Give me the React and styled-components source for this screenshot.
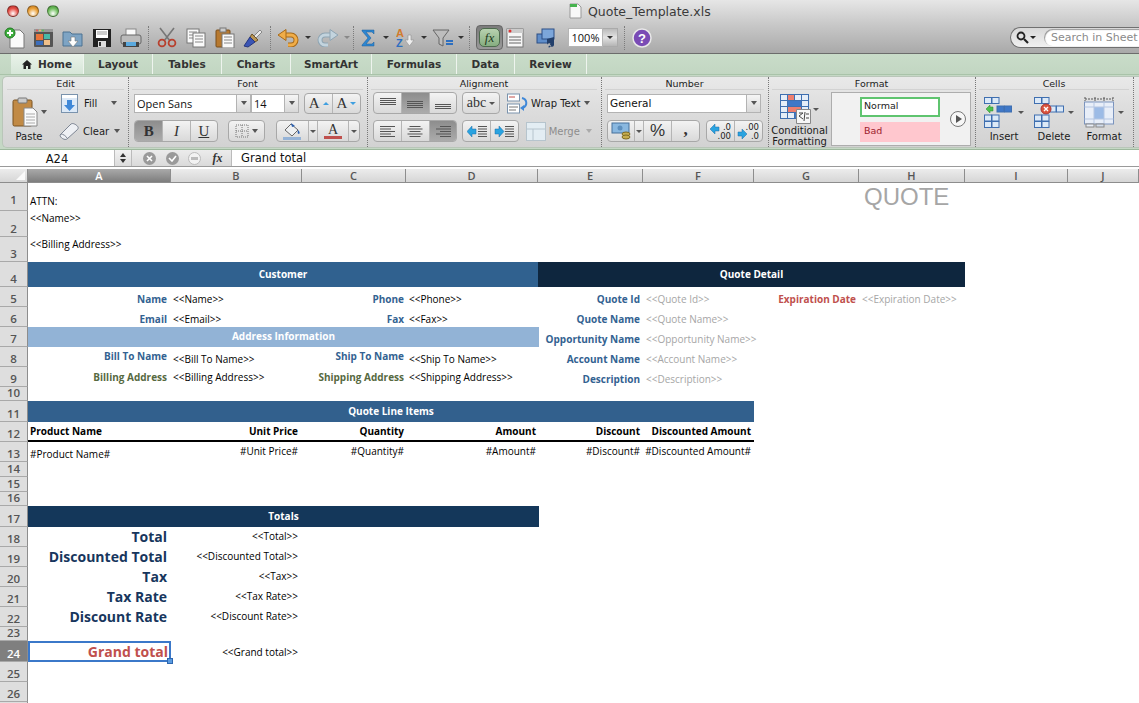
import React from 'react'
import styled, { createGlobalStyle } from 'styled-components'

const uiFont = '"DejaVu Sans", "Liberation Sans", sans-serif'
const sheetFont = '"Open Sans", "Liberation Sans", sans-serif'

const GlobalStyle = createGlobalStyle`
  html, body { margin: 0; padding: 0; background: #fff; overflow: hidden; }
  #root { width: 1139px; height: 703px; overflow: hidden; }
  * { box-sizing: border-box; }
`

const Chrome = styled.div`
  height: 54px;
  background: linear-gradient(#e6e6e6, #c9c9c9 45%, #a9a9a9);
  border-bottom: 1px solid #6c6c6c;
`
const TitleBar = styled.div`
  height: 22px;
  display: flex;
  align-items: center;
  padding-left: 7px;
`
const Light = styled.span`
  width: 12px;
  height: 12px;
  margin-right: 8px;
  border-radius: 50%;
  border: 1px solid rgba(0, 0, 0, 0.35);
  background: radial-gradient(circle at 50% 75%, #fff 0, ${p => p.$c} 55%, ${p => p.$d});
`
const Title = styled.div`
  margin-left: 502px;
  display: flex;
  align-items: center;
  gap: 6px;
  font: 12.5px ${uiFont};
  color: #3a3a3a;
`
const ToolRow = styled.div`
  height: 31px;
  display: flex;
  align-items: center;
`
const Slot = styled.div`
  width: ${p => p.$w}px;
  flex: none;
  display: flex;
  align-items: center;
  justify-content: center;
  gap: 2px;
`
const Sep = styled.div`
  width: 1px;
  height: 24px;
  flex: none;
  margin: 0 ${p => p.$m || 8}px;
  border-left: 1px dotted #7c7c7c;
`
const FxToggle = styled.div`
  width: 27px;
  height: 25px;
  flex: none;
  margin: 0 2px 0 4px;
  display: flex;
  align-items: center;
  justify-content: center;
  background: linear-gradient(#7b7b7b, #999);
  border: 1px solid #666;
  border-radius: 4px;
`
const FxFace = styled.div`
  width: 21px;
  height: 19px;
  display: flex;
  align-items: center;
  justify-content: center;
  border-radius: 5px;
  border: 1px solid #4d6b4d;
  background: linear-gradient(#b8d2b0, #86ad80);
  font: italic 13px "Liberation Serif", serif;
  color: #1e3a1e;
`
const ZoomBox = styled.div`
  width: 50px;
  height: 19px;
  flex: none;
  display: flex;
  font: 11px ${sheetFont};
  color: #111;
`
const ZoomValue = styled.div`
  width: 35px;
  background: #fff;
  border: 1px solid #b5b5b5;
  display: flex;
  align-items: center;
  justify-content: center;
`
const ZoomArrow = styled.div`
  width: 15px;
  background: linear-gradient(#bbb, #e3e3e3 50%, #b5b5b5);
  border: 1px solid #aaa;
  border-left: 0;
  display: flex;
  align-items: center;
  justify-content: center;
`
const Search = styled.div`
  margin-left: auto;
  width: 129px;
  height: 21px;
  flex: none;
  display: flex;
  align-items: center;
  padding-left: 5px;
  gap: 1px;
  border: 1px solid #707070;
  border-right: 0;
  border-radius: 11px 0 0 11px;
  background: linear-gradient(#d8d8d8, #f0f0f0);
`
const SearchInput = styled.div`
  flex: 1;
  height: 17px;
  margin-left: 7px;
  padding-left: 7px;
  background: #fff;
  border-radius: 9px 0 0 9px;
  box-shadow: inset 1px 1px 1px #999;
  font: 11px/18px ${uiFont};
  color: #8a8a8a;
  white-space: nowrap;
`

const TabStrip = styled.div`
  height: 21px;
  display: flex;
  padding-left: 11px;
  background: linear-gradient(#c9dcc9, #c2d6c2);
  border-bottom: 1px solid #a9c3a9;
`
const Tab = styled.div`
  width: ${p => p.$w}px;
  display: flex;
  align-items: center;
  justify-content: center;
  gap: 6px;
  font: bold 10.5px ${uiFont};
  color: #333;
  border-right: 1px solid #eef4ee;
  background: ${p => (p.$active ? 'linear-gradient(#eaf3ea, #d6e6d8)' : 'transparent')};
`

const RibbonWrap = styled.div`
  height: 75px;
  background: #c5d8c5;
  padding: 1px 0 1px 2px;
  border-bottom: 1px solid #9db89d;
`
const Ribbon = styled.div`
  height: 72px;
  display: flex;
  border-radius: 5px 0 0 5px;
  border: 1px solid #b9c6b9;
  border-right: 0;
  background: linear-gradient(#e9e9e9, #dcdcdc 50%, #d2d2d2);
`
const Group = styled.section`
  width: ${p => p.$w}px;
  flex: none;
  display: flex;
  flex-direction: column;
  padding: 0 4px 0 ${p => (p.$first ? 4 : 3)}px;
  border-left: ${p => (p.$first ? '0' : '1px dotted #777')};
  border-right: ${p => (p.$last ? '1px dotted #777' : '0')};
`
const GroupName = styled.div`
  height: 13px;
  flex: none;
  text-align: center;
  font: 9.5px/13px ${uiFont};
  color: #222;
  border-bottom: 1px solid #d2d2d2;
`
const GroupBody = styled.div`
  flex: 1;
  display: flex;
  gap: ${p => p.$gap || 0}px;
  padding-top: ${p => p.$top ?? 3}px;
  padding-left: ${p => p.$left || 0}px;
`
const Stack = styled.div`
  display: flex;
  flex-direction: column;
  gap: ${p => p.$gap ?? 7}px;
`
const Line = styled.div`
  display: flex;
  align-items: center;
  height: ${p => p.$h || 20}px;
  margin-left: ${p => p.$ml || 0}px;
`
const Label = styled.span`
  font: 10px ${uiFont};
  color: ${p => (p.$off ? '#8d8d8d' : '#1b1b1b')};
  white-space: nowrap;
  margin-left: ${p => p.$ml || 0}px;
`
const IconBox = styled.div`
  display: flex;
  align-items: center;
  flex: none;
  margin-left: ${p => p.$ml || 0}px;
`
const Seg = styled.div`
  display: flex;
  height: ${p => p.$h || 22}px;
  margin-left: ${p => p.$ml || 0}px;
  border: 1px solid #a8a8a8;
  border-radius: 4px;
  overflow: hidden;
  background: linear-gradient(#f3f3f3, #d9d9d9);
`
const SegBtn = styled.div`
  width: ${p => p.$w || 27.33}px;
  display: flex;
  align-items: center;
  justify-content: center;
  gap: 3px;
  padding-bottom: ${p => p.$pb || 0}px;
  border-left: ${p => (p.$first ? '0' : '1px solid #b5b5b5')};
  background: ${p => (p.$on ? 'linear-gradient(#8d8d8d, #ababab)' : 'transparent')};
  font: ${p => p.$font || `13px ${uiFont}`};
  color: #333;
`
const Combo = styled.div`
  width: ${p => p.$w}px;
  height: 19px;
  flex: none;
  display: flex;
  align-items: center;
  padding-left: 2px;
  background: #fff;
  border: 1px solid #b3b3b3;
  font: ${p => p.$font || `11px ${sheetFont}`};
  color: #111;
`
const ComboText = styled.span`
  flex: 1;
`
const ComboArrow = styled.span`
  width: 14px;
  height: 100%;
  display: flex;
  align-items: center;
  justify-content: center;
  background: linear-gradient(#f5f5f5, #d8d8d8);
  border-left: 1px solid #b3b3b3;
`
const Caret = styled.i`
  display: inline-block;
  flex: none;
  margin-left: ${p => p.$ml || 0}px;
  width: 0;
  height: 0;
  border-left: ${p => p.$s || 3.5}px solid transparent;
  border-right: ${p => p.$s || 3.5}px solid transparent;
  ${p => (p.$up ? 'border-bottom' : 'border-top')}: ${p => (p.$s || 3.5) + 0.5}px solid ${p => p.$c || '#555'};
`
const ToolCol = styled.div`
  width: ${p => p.$w}px;
  flex: none;
  display: flex;
  flex-direction: column;
  align-items: center;
`
const ToolIcon = styled.div`
  height: ${p => p.$h || 36}px;
  display: flex;
  align-items: center;
  gap: ${p => p.$gap ?? 4}px;
`
const ToolText = styled.div`
  font: 10px/11px ${uiFont};
  color: #1b1b1b;
  text-align: center;
  white-space: nowrap;
`
const StyleGallery = styled.div`
  width: 140px;
  height: 54px;
  flex: none;
  margin: -1px 0 0 4px;
  display: flex;
  align-items: center;
  padding-left: 28px;
  background: #f1f1f1;
  border: 1px solid #adadad;
`
const StyleList = styled.div`
  display: flex;
  flex-direction: column;
  gap: 5px;
  width: 80px;
`
const StyleChip = styled.div`
  height: 20px;
  padding-left: 2px;
  font: 9.5px/14px ${uiFont};
  color: ${p => (p.$bad ? '#9c1c2c' : '#222')};
  background: ${p => (p.$bad ? '#ffc7ce' : '#fff')};
  border: 2px solid ${p => (p.$bad ? '#ffc7ce' : '#5fc46f')};
`
const PlayCircle = styled.div`
  width: 16px;
  height: 16px;
  margin-left: 10px;
  display: flex;
  align-items: center;
  justify-content: center;
  border: 1px solid #777;
  border-radius: 50%;
  background: #f7f7f7;
  padding-left: 2px;
`
const PlayArrow = styled.i`
  border-left: 6px solid #555;
  border-top: 4px solid transparent;
  border-bottom: 4px solid transparent;
`

const FormulaBar = styled.div`
  height: 17px;
  display: flex;
  background: #fff;
  border-bottom: 1px solid #9a9a9a;
  font: 11.5px ${uiFont};
  color: #111;
`
const NameBox = styled.div`
  width: 114px;
  padding-top: 1px;
  display: flex;
  align-items: center;
  justify-content: center;
`
const Stepper = styled.div`
  width: 18px;
  display: flex;
  flex-direction: column;
  align-items: center;
  justify-content: center;
  gap: 2px;
  border-left: 1px solid #bbb;
  border-right: 1px solid #bbb;
  background: linear-gradient(#f2f2f2, #dcdcdc);
`
const StepArrow = styled.i`
  border-left: 3px solid transparent;
  border-right: 3px solid transparent;
  ${p => (p.$up ? 'border-bottom: 4px solid #333;' : 'border-top: 4px solid #333;')}
`
const FormulaBtns = styled.div`
  width: 99px;
  display: flex;
  align-items: center;
  padding-left: 11px;
  gap: 9.5px;
  background: linear-gradient(#ececec, #dadada);
`
const RoundBtn = styled.div`
  width: 13px;
  height: 13px;
  display: flex;
  align-items: center;
  justify-content: center;
  border-radius: 50%;
  background: ${p => p.$c || '#9a9a9a'};
  border: ${p => (p.$c ? '1px solid #bbb' : '0')};
`
const FnLabel = styled.span`
  margin-left: 2px;
  font: italic bold 12px "Liberation Serif", serif;
  color: #333;
`
const FormulaText = styled.div`
  flex: 1;
  padding-left: 9px;
  font: 11.5px/17px ${uiFont};
  border-left: 1px solid #bbb;
`
const Gap = styled.div`
  height: 2px;
  background: #fff;
`

const columns = [143, 131, 104, 132, 105, 111, 105, 106, 103, 71]
const rows = [28, 26, 25, 25, 20, 20, 20, 20, 20, 14, 21, 20, 20, 15, 15, 14, 21, 20, 20, 20, 20, 20, 14, 21, 20, 20, 20]
const rightPad = { 2: 4, 3: 4, 4: 2, 5: 2, 6: 3, 7: 3, 8: 3 }

const Sheet = styled.div`
  display: grid;
  grid-template-columns: 28px ${columns.map(c => `${c}px`).join(' ')};
  grid-template-rows: 14px ${rows.map(r => `${r}px`).join(' ')};
`
const Corner = styled.div`
  grid-area: 1 / 1;
  display: flex;
  align-items: flex-end;
  justify-content: flex-end;
  padding: 0 2px 2px 0;
  background: linear-gradient(#ececec, #d6d6d6);
  border-right: 1px solid #8d8d8d;
  border-bottom: 1px solid #8d8d8d;
`
const CornerMark = styled.i`
  border-left: 9px solid transparent;
  border-bottom: 9px solid #fbfbfb;
`
const ColHead = styled.div`
  grid-area: 1 / ${p => p.$c};
  display: flex;
  align-items: center;
  justify-content: center;
  font: 600 11px ${sheetFont};
  color: ${p => (p.$on ? '#fff' : '#555')};
  background: ${p => (p.$on ? 'linear-gradient(#aaa, #7d7d7d)' : 'linear-gradient(#ececec, #d6d6d6)')};
  border-right: 1px solid #8d8d8d;
  border-bottom: 1px solid #8d8d8d;
`
const RowHead = styled.div`
  grid-area: ${p => p.$r} / 1;
  display: flex;
  align-items: flex-end;
  justify-content: center;
  padding-bottom: ${p => p.$pb || 0}px;
  font: 600 11.5px/15px ${sheetFont};
  color: ${p => (p.$on ? '#fff' : '#555')};
  background: ${p => (p.$on ? '#7f7f7f' : '#dedede')};
  border-right: 1px solid #8d8d8d;
  border-bottom: 1px solid #a9a9a9;
`
const Cell = styled.div`
  grid-area: ${p => p.$r} / ${p => p.$c} / span 1 / span ${p => p.$span || 1};
  min-width: 0;
  display: flex;
  white-space: nowrap;
  align-items: ${p => p.$v || 'center'};
  justify-content: ${p => (p.$right ? 'flex-end' : 'flex-start')};
  padding-top: ${p => p.$pt || 0}px;
  padding-bottom: ${p => p.$pb || 0}px;
  padding-right: ${p => (p.$right ? rightPad[p.$c] : 0)}px;
  padding-left: ${p => (p.$right ? 0 : p.$c <= 3 ? 2 : 3)}px;
  font: ${p => p.$weight || 400} ${p => p.$size || 10}px ${sheetFont};
  color: ${p => p.$color || '#000'};
`
const Band = styled.div`
  grid-area: ${p => p.$r} / ${p => p.$c} / span 1 / span ${p => p.$span};
  display: flex;
  align-items: center;
  justify-content: center;
  padding-bottom: 2px;
  margin-right: ${p => (p.$over ? -1 : 0)}px;
  background: ${p => p.$bg};
  color: #fff;
  font: 700 10px ${sheetFont};
`
const HeaderCell = styled(Cell)`
  border-bottom: 2px solid #000;
  font-weight: 700;
`
const QuoteTitle = styled(Cell)`
  font: 24px/28px "Liberation Sans", sans-serif;
  color: #a6a6a6;
  padding-left: 5px;
  align-items: flex-start;
`
const Selection = styled.div`
  grid-area: 25 / 2;
  position: relative;
  display: flex;
  align-items: center;
  justify-content: flex-end;
  padding-right: 1px;
  border: 2px solid #3b78c9;
  font: 700 14px ${sheetFont};
  color: #c0504d;
  white-space: nowrap;
`
const Handle = styled.i`
  position: absolute;
  right: -4px;
  bottom: -4px;
  width: 6px;
  height: 6px;
  background: #5b9be0;
  border: 1px solid #2e67b0;
`

/* toolbar icons */
const Icon = ({ w = 20, h = 20, children }) => (
  <svg width={w} height={h} viewBox={`0 0 ${w} ${h}`} style={{ display: 'block', flex: 'none' }}>{children}</svg>
)

const NewDoc = () => (
  <Icon w={22} h={22}>
    <path d="M6 3h10l4 4v14H6z" fill="#fafafa" stroke="#777" />
    <circle cx="6" cy="6" r="5" fill="#3fae3f" stroke="#1f7a1f" />
    <path d="M6 3v6M3 6h6" stroke="#fff" strokeWidth="2" />
  </Icon>
)
const GalleryIcon = () => (
  <Icon w={21} h={20}>
    <rect x="1" y="1" width="19" height="18" rx="1" fill="#555" />
    <rect x="1" y="1" width="19" height="3" fill="#999" />
    <circle cx="4" cy="2.5" r="1" fill="#e55" /><circle cx="7" cy="2.5" r="1" fill="#ec5" /><circle cx="10" cy="2.5" r="1" fill="#5c5" />
    <rect x="3" y="6" width="7" height="6" fill="#e8743b" /><rect x="11" y="6" width="6" height="5" fill="#49b9a8" />
    <rect x="3" y="13" width="7" height="4" fill="#3c6ebc" /><rect x="11" y="12" width="6" height="5" fill="#f0c08a" />
  </Icon>
)
const OpenIcon = () => (
  <Icon w={22} h={20}>
    <path d="M1 4h7l2 2h10v12H1z" fill="#7ea4c4" stroke="#4d7392" />
    <path d="M9 9h4v4h3l-5 6-5-6h3z" fill="#fff" stroke="#777" strokeWidth=".6" />
  </Icon>
)
const SaveIcon = () => (
  <Icon w={20} h={20}>
    <path d="M1 1h18v18H1z" fill="#222" />
    <rect x="4" y="2" width="12" height="8" fill="#fff" />
    <path d="M5 4h10M5 6h10" stroke="#999" />
    <rect x="6" y="13" width="8" height="6" fill="#ddd" /><rect x="7" y="14" width="2" height="4" fill="#333" />
  </Icon>
)
const PrintIcon = () => (
  <Icon w={22} h={20}>
    <rect x="6" y="1" width="10" height="7" fill="#fafafa" stroke="#888" />
    <rect x="1" y="7" width="20" height="9" rx="2" fill="#bbb" stroke="#666" />
    <rect x="3" y="14" width="16" height="5" fill="#444" />
    <rect x="6" y="14" width="10" height="4" fill="#5aa9df" />
  </Icon>
)
const CutIcon = () => (
  <Icon w={20} h={21}>
    <path d="M3 1l10 13M17 1L7 14" stroke="#777" strokeWidth="1.6" />
    <circle cx="5" cy="16" r="3.4" fill="none" stroke="#b8402e" strokeWidth="1.8" />
    <circle cx="15" cy="16" r="3.4" fill="none" stroke="#b8402e" strokeWidth="1.8" />
  </Icon>
)
const DocLines = ({ x, y, w = 12, h = 14 }) => (
  <g>
    <rect x={x} y={y} width={w} height={h} fill="#fafafa" stroke="#777" />
    <path d={`M${x + 2} ${y + 3}h${w - 4}M${x + 2} ${y + 6}h${w - 4}M${x + 2} ${y + 9}h${w - 4}`} stroke="#888" />
  </g>
)
const CopyIcon = () => (
  <Icon w={20} h={20}>
    <DocLines x={1} y={1} />
    <DocLines x={7} y={5} />
  </Icon>
)
const PasteSmall = () => (
  <Icon w={20} h={21}>
    <rect x="1" y="3" width="14" height="17" rx="1" fill="#b7792f" stroke="#7a4f1c" />
    <rect x="5" y="1" width="6" height="4" fill="#ccc" stroke="#777" />
    <DocLines x={7} y={7} />
  </Icon>
)
const BrushIcon = () => (
  <Icon w={21} h={20}>
    <path d="M11 8l6-6 2 2-6 6z" fill="#e9e9e9" stroke="#888" />
    <path d="M9 6l6 6-3 2-5-5z" fill="#b99555" stroke="#6d5326" />
    <path d="M7 9l5 5-7 5-4-1z" fill="#3b55b5" stroke="#26367c" />
  </Icon>
)
const UndoIcon = ({ redo }) => {
  const edge = redo ? '#8fa5b3' : '#a76a1a'
  const fill = redo ? '#c3d4de' : '#f0ad48'
  return (
    <Icon w={23} h={18}>
      <g transform={redo ? 'translate(23 0) scale(-1 1)' : undefined}>
        <path d="M8 6h6a5 5 0 0 1 0 10h-3" fill="none" stroke={edge} strokeWidth="5" />
        <path d="M8 6h6a5 5 0 0 1 0 10h-3" fill="none" stroke={fill} strokeWidth="3" />
        <path d="M9 .5L1 6l8 5.500z" fill={fill} stroke={edge} />
      </g>
    </Icon>
  )
}
const SigmaIcon = () => (
  <Icon w={14} h={18}>
    <path d="M1 1h12v4l-2-2H5l5 6-5 6h6l2-2v4H1v-1l6-7-6-7z" fill="#2d86d1" stroke="#1c5c99" strokeWidth=".5" />
  </Icon>
)
const SortIcon = () => (
  <Icon w={20} h={20}>
    <text x="0" y="9" fontFamily="Liberation Sans, sans-serif" fontSize="11" fontWeight="700" fill="#d27a2c">A</text>
    <text x="0" y="19" fontFamily="Liberation Sans, sans-serif" fontSize="11" fontWeight="700" fill="#2d6fc0">Z</text>
    <path d="M12 7h3v5h3l-4.500 6L9 12h3z" fill="#eee" stroke="#999" strokeWidth=".7" />
  </Icon>
)
const FilterIcon = () => (
  <Icon w={22} h={20}>
    <path d="M1 2h16l-6 8v8l-4-2v-6z" fill="#bdbdbd" stroke="#666" />
    <path d="M14 13h7M14 16h7" stroke="#2d6fc0" strokeWidth="1.8" />
  </Icon>
)
const FormIcon = () => (
  <Icon w={18} h={20}>
    <rect x="1" y="1" width="16" height="18" fill="#f6f6f6" stroke="#777" />
    <rect x="1" y="1" width="16" height="4" fill="#ccc" />
    <circle cx="4" cy="3" r="1.500" fill="#d33" />
    <path d="M3 9h12M3 12h12M3 15h12" stroke="#666" />
  </Icon>
)
const MediaIcon = () => (
  <Icon w={21} h={20}>
    <rect x="1" y="6" width="11" height="9" fill="#5f8dc9" stroke="#2d4f85" />
    <rect x="6" y="1" width="12" height="10" fill="#7ca6da" stroke="#2d4f85" />
    <path d="M12 19a2 2 0 1 0-1-2V11l7-2v8a2 2 0 1 1-1-2" fill="#223f6b" />
  </Icon>
)
const HelpIcon = () => (
  <Icon w={20} h={20}>
    <circle cx="10" cy="10" r="9" fill="#7a4bb5" stroke="#e8e8e8" strokeWidth="1.500" />
    <text x="10" y="14.500" textAnchor="middle" fontFamily="Liberation Sans, sans-serif" fontSize="13" fontWeight="700" fill="#fff">?</text>
  </Icon>
)
const DocTab = () => (
  <Icon w={13} h={16}>
    <path d="M1 1h8l3 3v11H1z" fill="#f8f8f8" stroke="#999" />
    <rect x="1" y="1" width="7" height="3" fill="#47b34f" />
  </Icon>
)
const Magnifier = () => (
  <Icon w={13} h={13}>
    <circle cx="5" cy="5" r="3.500" fill="none" stroke="#222" strokeWidth="1.800" />
    <path d="M8 8l4 4" stroke="#222" strokeWidth="2.200" />
  </Icon>
)
const HomeGlyph = () => (
  <Icon w={10} h={9}>
    <path d="M5 0l5 4.500H8.500V9H6V6H4v3H1.500V4.500H0z" fill="#222" />
  </Icon>
)

/* ribbon icons */
const PasteBig = () => (
  <Icon w={26} h={30}>
    <rect x="1" y="3" width="19" height="26" rx="1.500" fill="#c18a45" stroke="#7a5220" />
    <rect x="6" y="1" width="9" height="5" rx="1" fill="#ccc" stroke="#777" />
    <path d="M12 11h9l4 4v14H12z" fill="#fafafa" stroke="#888" />
    <path d="M14 17h9M14 20h9M14 23h9M14 26h9" stroke="#aaa" />
  </Icon>
)
const FillDown = () => (
  <Icon w={17} h={19}>
    <rect x=".5" y=".5" width="16" height="18" fill="#dce9f7" stroke="#7a93ad" />
    <rect x="1" y="1" width="15" height="3" fill="#fff" />
    <path d="M6 6h5v5h3l-5.500 6L3 11h3z" fill="#3f88d8" />
  </Icon>
)
const Eraser = () => (
  <Icon w={20} h={19}>
    <path d="M1 13L12 2c2-1.500 6 1 7 3 .5 1 0 2-1 3L8 17c-2 1.500-7-1-7-4z" fill="#eef0f4" stroke="#7d8593" />
    <path d="M2 12c2 0 5 2 6 4" stroke="#7d8593" fill="none" />
  </Icon>
)
const BorderIcon = () => (
  <Icon w={14} h={14}>
    <path d="M1 1h12v12H1zM7 1v12M1 7h12" fill="none" stroke="#777" strokeDasharray="1 1" />
  </Icon>
)
const Bucket = () => (
  <Icon w={20} h={18}>
    <path d="M3 8l6-6 7 6-6 6z" fill="#eef0f2" stroke="#666" />
    <path d="M9 1l4 3-3 1z" fill="#2a5fb0" />
    <path d="M16 8c2 2 2 3 1 4-1 0-2-1-1-4z" fill="#2a5fb0" />
    <rect x="1" y="15" width="18" height="3" fill="#95b3d7" />
  </Icon>
)
const LetterColor = () => (
  <Icon w={18} h={18}>
    <text x="9" y="12" textAnchor="middle" fontFamily="Liberation Serif, serif" fontSize="14" fill="#333">A</text>
    <rect x="0" y="14" width="18" height="3" fill="#c0504d" />
  </Icon>
)
const Lines = ({ kind }) => {
  const widths = { left: [15, 11, 15, 11, 15], center: [11, 15, 11, 15, 11], right: [11, 15, 11, 15, 11] }
  const offs = { top: 1, middle: 4, bottom: 7 }
  if (offs[kind] !== undefined) {
    return (
      <Icon w={16} h={13}>
        {[0, 1, 2, 3].map(i => <rect key={i} x="0" y={offs[kind] + i * 2} width="16" height="1" fill="#555" />)}
      </Icon>
    )
  }
  return (
    <Icon w={16} h={13}>
      {widths[kind].map((w, i) => (
        <rect key={i} x={kind === 'left' ? 0 : kind === 'center' ? (16 - w) / 2 : 16 - w} y={1 + i * 2.500} width={w} height="1" fill="#555" />
      ))}
    </Icon>
  )
}
const Indent = ({ flip }) => (
  <Icon w={20} h={13}>
    <path d={flip ? 'M1 4h4V1l5 5.500L5 12V9H1z' : 'M9 4H5V1L0 6.500 5 12V9h4z'} fill="#29a3e0" stroke="#1f6fa8" strokeWidth=".5" />
    {[0, 1, 2, 3, 4].map(i => <rect key={i} x="11" y={1 + i * 2.500} width="9" height="1" fill="#555" />)}
  </Icon>
)
const WrapIcon = () => (
  <Icon w={21} h={21}>
    <rect x=".5" y="1" width="12" height="7" fill="#fff" stroke="#7a93ad" />
    <path d="M2 4h6" stroke="#c0504d" />
    <rect x=".5" y="11" width="12" height="9" fill="#fff" stroke="#7a93ad" />
    <path d="M2 14h9M2 17h7" stroke="#777" />
    <path d="M15 5c5 1 6 7 1 10" fill="none" stroke="#3f88d8" strokeWidth="2" />
    <path d="M13 15l4-3v6z" fill="#3f88d8" />
  </Icon>
)
const MergeIcon = () => (
  <Icon w={20} h={19}>
    <rect x=".5" y=".5" width="19" height="18" fill="#e3edf3" stroke="#b6c4cd" />
    <path d="M.5 7h19M7 7v11" stroke="#b6c4cd" />
  </Icon>
)
const MoneyIcon = () => (
  <Icon w={20} h={18}>
    <rect x="1" y="1" width="17" height="10" fill="#8ab8e0" stroke="#47719b" />
    <circle cx="9" cy="6" r="2.500" fill="#5d8fbe" />
    <ellipse cx="15" cy="12" rx="4" ry="2" fill="#c7ad4f" stroke="#7d6a22" />
    <ellipse cx="15" cy="15" rx="4" ry="2" fill="#c7ad4f" stroke="#7d6a22" />
  </Icon>
)
const Decimal = ({ flip }) => (
  <Icon w={23} h={18}>
    <path d={flip ? 'M1 10h4V7l5 5-5 5v-3H1z' : 'M10 5H6V2L1 7l5 5V9h4z'} fill="#29a3e0" stroke="#1f6fa8" strokeWidth=".5" />
    <text x="22" y="8" textAnchor="end" fontFamily="DejaVu Sans, sans-serif" fontSize="8.500" fill="#222">{flip ? '.00' : '.0'}</text>
    <text x="22" y="17" textAnchor="end" fontFamily="DejaVu Sans, sans-serif" fontSize="8.500" fill="#222">{flip ? '.0' : '.00'}</text>
  </Icon>
)
const Conditional = () => (
  <Icon w={31} h={31}>
    <rect x=".5" y=".5" width="28" height="24" fill="#e6eef8" stroke="#3f6fb0" />
    <path d="M.5 6.500h28M.5 12.500h28M.5 18.500h28M7.500 .5v24M14.500 .5v24M21.500 .5v24" stroke="#3f6fb0" />
    <rect x="8" y="1" width="6" height="5" fill="#ee7f6f" />
    <rect x="8" y="7" width="13" height="5" fill="#3f78c8" />
    <rect x="8" y="13" width="13" height="5" fill="#ee7f6f" />
    <rect x="15" y="19" width="6" height="5" fill="#3f78c8" />
    <path d="M16.500 15.500h14v14h-14z" fill="#f7f7f7" stroke="#888" />
    <path d="M19 19h4l-4 3 4 3M25 18l-1 9M26 20h3M26 24h3" fill="none" stroke="#444" />
  </Icon>
)
const Mini = ({ x, y, n = 2, r = 1, c = '#dce9f7' }) => {
  const cells = []
  for (let j = 0; j < r; j++) {
    for (let i = 0; i < n; i++) {
      cells.push(<rect key={`${i}-${j}`} x={x + i * 7.500} y={y + j * 6.500} width="7" height="6" fill={c} stroke="#3f6fb0" />)
    }
  }
  return <g>{cells}</g>
}
const InsertCells = () => (
  <Icon w={30} h={31}>
    <Mini x={.5} y={.5} />
    <path d="M2 12l4-4v2h3v4H6v2z" fill="#4ec04e" stroke="#2a8a2a" strokeWidth=".5" />
    <Mini x={13} y={9} c="#3f78c8" />
    <Mini x={.5} y={18} r={2} />
  </Icon>
)
const DeleteCells = () => (
  <Icon w={30} h={31}>
    <Mini x={.5} y={.5} />
    <Mini x={15} y={9} />
    <circle cx="12" cy="12" r="5" fill="#d9553e" stroke="#a33" />
    <path d="M10 10l4 4M14 10l-4 4" stroke="#fff" strokeWidth="1.400" />
    <Mini x={.5} y={18} r={2} />
  </Icon>
)
const FormatCells = () => (
  <Icon w={30} h={31}>
    <path d="M1 2h28M1 0v4M29 0v4M11 0v4M20 0v4" stroke="#555" strokeDasharray="2 1" />
    <rect x=".5" y="5" width="29" height="22" fill="#e8eef8" stroke="#7a93bd" />
    <rect x="10" y="10" width="10" height="12" fill="#9cbbe6" />
    <path d="M10 5v22M20 5v22M.5 10h29M.5 22h29" stroke="#b5c6e2" />
    <rect x="2" y="27" width="8" height="3" fill="#e8eef8" stroke="#888" />
    <rect x="12" y="27" width="8" height="3" fill="#d2dded" stroke="#888" />
  </Icon>
)

const toolSlots = [
  [29, <NewDoc />], [29, <GalleryIcon />], [29, <OpenIcon />], [29, <SaveIcon />], [29, <PrintIcon />],
]
const editSlots = [[29, <CutIcon />], [29, <CopyIcon />], [29, <PasteSmall />], [29, <BrushIcon />]]

const tabs = [
  ['Home', 73], ['Layout', 69], ['Tables', 69], ['Charts', 69], ['SmartArt', 81],
  ['Formulas', 85], ['Data', 58], ['Review', 72],
]

const pairs = [
  { r: 5, a: 'Name', b: '<<Name>>', c: 'Phone', d: '<<Phone>>' },
  { r: 6, a: 'Email', b: '<<Email>>', c: 'Fax', d: '<<Fax>>' },
]
const detail = [
  [5, 'Quote Id', '<<Quote Id>>'],
  [6, 'Quote Name', '<<Quote Name>>'],
  [7, 'Opportunity Name', '<<Opportunity Name>>'],
  [8, 'Account Name', '<<Account Name>>'],
  [9, 'Description', '<<Description>>'],
]
const lineHeads = [
  [2, 'Product Name'], [3, 'Unit Price'], [4, 'Quantity'], [5, 'Amount'], [6, 'Discount'], [7, 'Discounted Amount'],
]
const lineVals = [
  [3, '#Unit Price#'], [4, '#Quantity#'], [5, '#Amount#'], [6, '#Discount#'], [7, '#Discounted Amount#'],
]
const totals = [
  [18, 'Total', '<<Total>>'],
  [19, 'Discounted Total', '<<Discounted Total>>'],
  [20, 'Tax', '<<Tax>>'],
  [21, 'Tax Rate', '<<Tax Rate>>'],
  [22, 'Discount Rate', '<<Discount Rate>>'],
]

const BLUE = '#336291'
const OLIVE = '#56693f'
const NAVY = '#17365d'
const RED = '#c0504d'
const GREY = '#a6a6a6'

export default function App() {
  return (
    <>
      <GlobalStyle />
      <Chrome>
        <TitleBar>
          <Light $c="#e8524a" $d="#a02420" />
          <Light $c="#eba23a" $d="#b46c14" />
          <Light $c="#72bf60" $d="#3e8a30" />
          <Title><DocTab />Quote_Template.xls</Title>
        </TitleBar>
        <ToolRow>
          {toolSlots.map(([w, icon], i) => <Slot key={i} $w={w}>{icon}</Slot>)}
          <Sep $m={3} />
          {editSlots.map(([w, icon], i) => <Slot key={i} $w={w}>{icon}</Slot>)}
          <Sep $m={2} />
          <Slot $w={42}><UndoIcon /><Caret $ml={3} $s={3} $c="#333" /></Slot>
          <Slot $w={36}><UndoIcon redo /><Caret $ml={3} $s={3} $c="#888" /></Slot>
          <Sep $m={2} />
          <Slot $w={38}><SigmaIcon /><Caret $ml={6} $s={3} $c="#333" /></Slot>
          <Slot $w={35}><SortIcon /><Caret $ml={3} $s={3} $c="#333" /></Slot>
          <Slot $w={38}><FilterIcon /><Caret $ml={2} $s={3} $c="#333" /></Slot>
          <Sep $m={2} />
          <FxToggle><FxFace>fx</FxFace></FxToggle>
          <Slot $w={20}><FormIcon /></Slot>
          <Slot $w={43}><MediaIcon /></Slot>
          <ZoomBox>
            <ZoomValue>100%</ZoomValue>
            <ZoomArrow><Caret $s={3} $c="#333" /></ZoomArrow>
          </ZoomBox>
          <Sep $m={6} />
          <Slot $w={22}><HelpIcon /></Slot>
          <Search>
            <Magnifier /><Caret $s={3} $c="#222" />
            <SearchInput>Search in Sheet</SearchInput>
          </Search>
        </ToolRow>
      </Chrome>

      <TabStrip>
        {tabs.map(([name, w], i) => (
          <Tab key={name} $w={w} $active={i === 0}>
            {i === 0 && <HomeGlyph />}
            {name}
          </Tab>
        ))}
      </TabStrip>

      <RibbonWrap>
        <Ribbon>
          <Group $first $w={125}>
            <GroupName>Edit</GroupName>
            <GroupBody $left={3} $gap={11}>
              <ToolCol $w={38}>
                <ToolIcon $h={38} $gap={3}><PasteBig /><Caret /></ToolIcon>
                <ToolText>Paste</ToolText>
              </ToolCol>
              <Stack $gap={8}>
                <Line $ml={2}><FillDown /><Label $ml={6}>Fill</Label><Caret $ml={14} /></Line>
                <Line><Eraser /><Label $ml={4}>Clear</Label><Caret $ml={5} /></Line>
              </Stack>
            </GroupBody>
          </Group>

          <Group $w={239}>
            <GroupName>Font</GroupName>
            <GroupBody $left={2}>
              <Stack>
                <Line>
                  <Combo $w={117}>
                    <ComboText>Open Sans</ComboText>
                    <ComboArrow><Caret /></ComboArrow>
                  </Combo>
                  <Combo $w={48}>
                    <ComboText>14</ComboText>
                    <ComboArrow><Caret /></ComboArrow>
                  </Combo>
                  <Seg $h={21} $ml={5}>
                    <SegBtn $first $font='15px "Liberation Serif", serif'>A<Caret $up $s={3} $c="#3f9fe0" /></SegBtn>
                    <SegBtn $font='15px "Liberation Serif", serif'>A<Caret $s={3} $c="#3f9fe0" /></SegBtn>
                  </Seg>
                </Line>
                <Line $h={22}>
                  <Seg>
                    <SegBtn $first $on $font='bold 15px "Liberation Serif", serif'>B</SegBtn>
                    <SegBtn $font='italic 15px "Liberation Serif", serif'>I</SegBtn>
                    <SegBtn $font='15px "Liberation Serif", serif'><u>U</u></SegBtn>
                  </Seg>
                  <Seg $ml={10}>
                    <SegBtn $first $w={35}><BorderIcon /><Caret /></SegBtn>
                  </Seg>
                  <Seg $ml={11}>
                    <SegBtn $first $w={31}><Bucket /></SegBtn>
                    <SegBtn $w={9}><Caret $s={3} /></SegBtn>
                    <SegBtn $w={31}><LetterColor /></SegBtn>
                    <SegBtn $w={11}><Caret $s={3} /></SegBtn>
                  </Seg>
                </Line>
              </Stack>
            </GroupBody>
          </Group>

          <Group $w={234}>
            <GroupName>Alignment</GroupName>
            <GroupBody $left={2}>
              <Stack>
                <Line>
                  <Seg>
                    <SegBtn $first><Lines kind="top" /></SegBtn>
                    <SegBtn $on><Lines kind="middle" /></SegBtn>
                    <SegBtn><Lines kind="bottom" /></SegBtn>
                  </Seg>
                  <Seg $ml={5}>
                    <SegBtn $first $w={36} $font='14px "Liberation Serif", serif'>abc<Caret $s={3} /></SegBtn>
                  </Seg>
                  <IconBox $ml={7}><WrapIcon /></IconBox>
                  <Label $ml={3}>Wrap Text</Label>
                  <Caret $ml={4} />
                </Line>
                <Line $h={22}>
                  <Seg>
                    <SegBtn $first><Lines kind="left" /></SegBtn>
                    <SegBtn><Lines kind="center" /></SegBtn>
                    <SegBtn $on><Lines kind="right" /></SegBtn>
                  </Seg>
                  <Seg $ml={5}>
                    <SegBtn $first><Indent /></SegBtn>
                    <SegBtn><Indent flip /></SegBtn>
                  </Seg>
                  <IconBox $ml={7}><MergeIcon /></IconBox>
                  <Label $ml={3} $off>Merge</Label>
                  <Caret $ml={6} $c="#aaa" />
                </Line>
              </Stack>
            </GroupBody>
          </Group>

          <Group $w={167}>
            <GroupName>Number</GroupName>
            <GroupBody $left={2}>
              <Stack>
                <Line>
                  <Combo $w={154} $font={`10.5px ${uiFont}`}>
                    <ComboText>General</ComboText>
                    <ComboArrow><Caret /></ComboArrow>
                  </Combo>
                </Line>
                <Line $h={22}>
                  <Seg>
                    <SegBtn $first $w={26}><MoneyIcon /></SegBtn>
                    <SegBtn $w={9}><Caret $s={3} /></SegBtn>
                    <SegBtn $w={28} $font={`17px "Liberation Sans", sans-serif`}>%</SegBtn>
                    <SegBtn $w={28} $pb={3} $font={`bold 17px/14px "Liberation Serif", serif`}>,</SegBtn>
                  </Seg>
                  <Seg $ml={6}>
                    <SegBtn $first><Decimal /></SegBtn>
                    <SegBtn><Decimal flip /></SegBtn>
                  </Seg>
                </Line>
              </Stack>
            </GroupBody>
          </Group>

          <Group $w={207}>
            <GroupName>Format</GroupName>
            <GroupBody>
              <ToolCol $w={55}>
                <ToolIcon $h={32} $gap={2}><Conditional /><Caret $s={3} /></ToolIcon>
                <ToolText>Conditional<br />Formatting</ToolText>
              </ToolCol>
              <StyleGallery>
                <StyleList>
                  <StyleChip>Normal</StyleChip>
                  <StyleChip $bad>Bad</StyleChip>
                </StyleList>
                <PlayCircle><PlayArrow /></PlayCircle>
              </StyleGallery>
            </GroupBody>
          </Group>

          <Group $last $w={159}>
            <GroupName>Cells</GroupName>
            <GroupBody $left={3} $gap={6}>
              <ToolCol $w={44}>
                <ToolIcon $h={38}><InsertCells /><Caret $s={3} /></ToolIcon>
                <ToolText>Insert</ToolText>
              </ToolCol>
              <ToolCol $w={44}>
                <ToolIcon $h={38}><DeleteCells /><Caret $s={3} /></ToolIcon>
                <ToolText>Delete</ToolText>
              </ToolCol>
              <ToolCol $w={44}>
                <ToolIcon $h={38}><FormatCells /><Caret $s={3} /></ToolIcon>
                <ToolText>Format</ToolText>
              </ToolCol>
            </GroupBody>
          </Group>
        </Ribbon>
      </RibbonWrap>

      <FormulaBar>
        <NameBox>A24</NameBox>
        <Stepper><StepArrow $up /><StepArrow /></Stepper>
        <FormulaBtns>
          <RoundBtn>
            <Icon w={7} h={7}><path d="M1 1l5 5M6 1L1 6" stroke="#fff" strokeWidth="1.600" /></Icon>
          </RoundBtn>
          <RoundBtn>
            <Icon w={9} h={7}><path d="M1 3l3 3 4-5" stroke="#fff" strokeWidth="1.600" fill="none" /></Icon>
          </RoundBtn>
          <RoundBtn $c="#f2f2f2">
            <Icon w={7} h={3}><rect width="7" height="3" fill="#bbb" /></Icon>
          </RoundBtn>
          <FnLabel>fx</FnLabel>
        </FormulaBtns>
        <FormulaText>Grand total</FormulaText>
      </FormulaBar>
      <Gap />

      <Sheet>
        <Corner><CornerMark /></Corner>
        {'ABCDEFGHIJ'.split('').map((l, i) => <ColHead key={l} $c={i + 2} $on={i === 0}>{l}</ColHead>)}
        {rows.map((_, i) => <RowHead key={i} $r={i + 2} $on={i === 23} $pb={i === 0 ? 3 : 0}>{i < 26 ? i + 1 : ''}</RowHead>)}

        <Cell $r={2} $c={2} $v="flex-end" $pb={3}>ATTN:</Cell>
        <Cell $r={3} $c={2} $v="flex-start">&lt;&lt;Name&gt;&gt;</Cell>
        <Cell $r={4} $c={2} $v="flex-start">&lt;&lt;Billing Address&gt;&gt;</Cell>
        <QuoteTitle $r={2} $c={9}>QUOTE</QuoteTitle>

        <Band $r={5} $c={2} $span={4} $bg="#30618f">Customer</Band>
        <Band $r={5} $c={6} $span={4} $bg="#0e263e">Quote Detail</Band>

        {pairs.map(p => (
          <React.Fragment key={p.r}>
            <Cell $r={p.r + 1} $c={2} $right $pt={4} $weight={700} $color={BLUE}>{p.a}</Cell>
            <Cell $r={p.r + 1} $c={3} $pt={4}>{p.b}</Cell>
            <Cell $r={p.r + 1} $c={4} $right $pt={4} $weight={700} $color={BLUE}>{p.c}</Cell>
            <Cell $r={p.r + 1} $c={5} $pt={4}>{p.d}</Cell>
          </React.Fragment>
        ))}

        <Band $r={8} $c={2} $span={4} $over $bg="#92b3d6">Address Information</Band>
        <Cell $r={9} $c={2} $right $pb={2} $weight={700} $color={BLUE}>Bill To Name</Cell>
        <Cell $r={9} $c={3} $pt={4}>&lt;&lt;Bill To Name&gt;&gt;</Cell>
        <Cell $r={9} $c={4} $right $pb={2} $weight={700} $color={BLUE}>Ship To Name</Cell>
        <Cell $r={9} $c={5} $pt={4}>&lt;&lt;Ship To Name&gt;&gt;</Cell>
        <Cell $r={10} $c={2} $right $weight={700} $color={OLIVE}>Billing Address</Cell>
        <Cell $r={10} $c={3}>&lt;&lt;Billing Address&gt;&gt;</Cell>
        <Cell $r={10} $c={4} $right $weight={700} $color={OLIVE}>Shipping Address</Cell>
        <Cell $r={10} $c={5}>&lt;&lt;Shipping Address&gt;&gt;</Cell>

        {detail.map(([r, label, value]) => (
          <React.Fragment key={r}>
            <Cell $r={r + 1} $c={6} $right $pt={4} $weight={700} $color={BLUE}>{label}</Cell>
            <Cell $r={r + 1} $c={7} $pt={4} $color={GREY}>{value}</Cell>
          </React.Fragment>
        ))}
        <Cell $r={6} $c={8} $right $pt={4} $weight={700} $color={RED}>Expiration Date</Cell>
        <Cell $r={6} $c={9} $pt={4} $color={GREY}>&lt;&lt;Expiration Date&gt;&gt;</Cell>

        <Band $r={12} $c={2} $span={6} $bg="#32608d">Quote Line Items</Band>
        {lineHeads.map(([c, label]) => <HeaderCell key={c} $r={13} $c={c} $right={c > 2}>{label}</HeaderCell>)}
        <Cell $r={14} $c={2} $pt={4}>#Product Name#</Cell>
        {lineVals.map(([c, label]) => <Cell key={c} $r={14} $c={c} $right $pb={2}>{label}</Cell>)}

        <Band $r={18} $c={2} $span={4} $over $bg="#14375a">Totals</Band>
        {totals.map(([r, label, value]) => (
          <React.Fragment key={r}>
            <Cell $r={r + 1} $c={2} $right $pb={2} $size={14} $weight={700} $color={NAVY}>{label}</Cell>
            <Cell $r={r + 1} $c={3} $right $pb={2}>{value}</Cell>
          </React.Fragment>
        ))}
        <Selection>Grand total<Handle /></Selection>
        <Cell $r={25} $c={3} $right>&lt;&lt;Grand total&gt;&gt;</Cell>
      </Sheet>
    </>
  )
}
